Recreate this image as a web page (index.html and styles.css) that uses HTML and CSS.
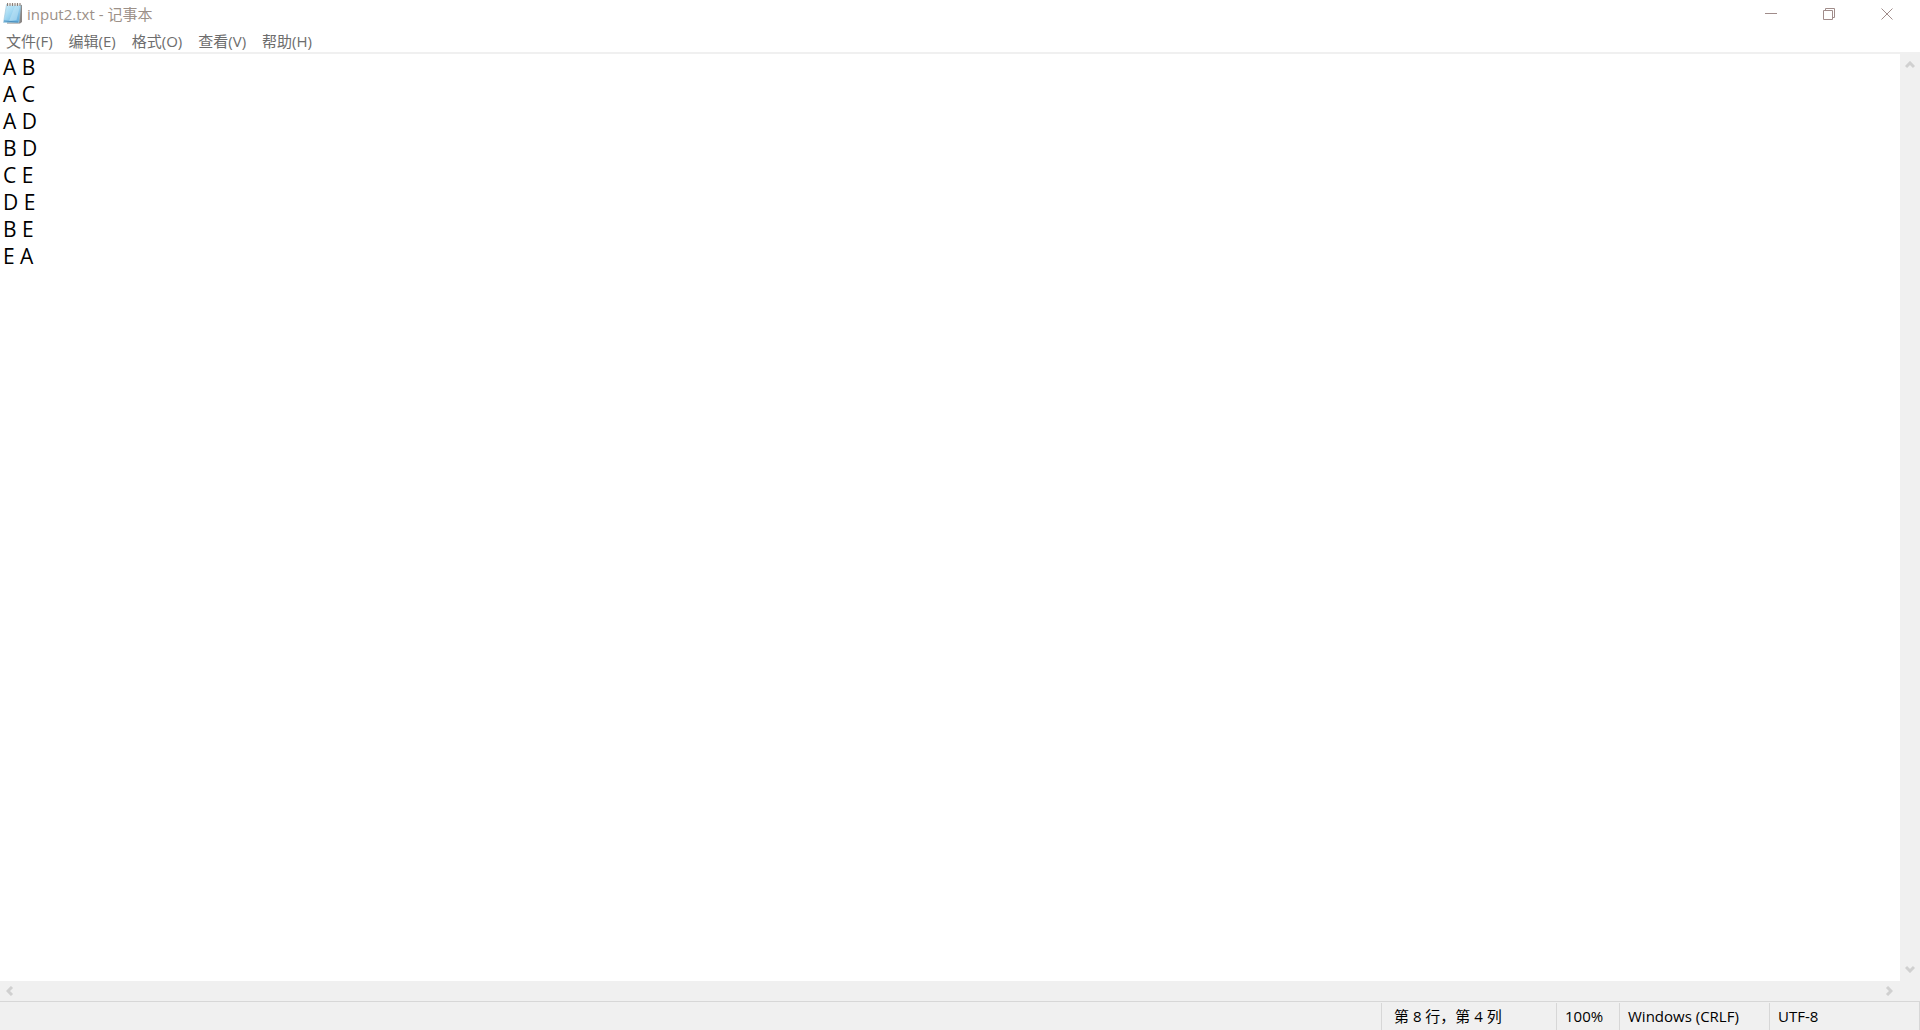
FILE: index.html
```html
<!DOCTYPE html>
<html lang="zh-CN">

<head>
    <meta charset="utf-8">
    <title>input2.txt - 记事本</title>
    <link rel="stylesheet" href="styles.css">
</head>

<body>
    <!-- title bar -->
    <header class="title-bar">
        <svg class="app-icon" width="20" height="22" viewBox="0 0 20 22">
            <defs>
                <linearGradient id="paper" x1="0" y1="0" x2="1" y2="1">
                    <stop offset="0" stop-color="#d3effa" />
                    <stop offset="0.4" stop-color="#a5daf3" />
                    <stop offset="1" stop-color="#5aa9dc" />
                </linearGradient>
            </defs>
            <path d="M5 2H19V19L17 20.500H4Z" fill="#8a8684" />
            <path d="M3.500 1.500H18L16 19.500H0.500Z" fill="url(#paper)" stroke="#9cc4da" stroke-width="0.600" />
            <path d="M12 3H17L13.500 17L6 18Z" fill="#c6e8f8" opacity="0.500" />
            <path d="M1 18L15 19" stroke="#4a8fbe" />
            <path d="M4 1.500H18" stroke="#e9e5e0" stroke-width="2" />
            <path d="M4.500 0V3M7 0V3M9.500 0V3M12 0V3M14.500 0V3M17 0V3" stroke="#8a7f78" />
        </svg>
        <h1 class="title">input2.txt - 记事本</h1>
        <div class="window-buttons">
            <button type="button" aria-label="最小化">
                <svg width="12" height="12" viewBox="0 0 12 12"><path d="M0 5.500H12" /></svg>
            </button>
            <button type="button" aria-label="还原">
                <svg width="12" height="12" viewBox="0 0 12 12"><path d="M0.500 2.500H9.500V11.500H0.500ZM2.500 2V0.500H11.500V9.500H10" /></svg>
            </button>
            <button type="button" aria-label="关闭">
                <svg width="12" height="12" viewBox="0 0 12 12"><path d="M0.500 0.500L11.500 11.500M11.500 0.500L0.500 11.500" /></svg>
            </button>
        </div>
    </header>
    <!-- menu -->
    <nav class="menu">
        <button type="button">文件(F)</button>
        <button type="button">编辑(E)</button>
        <button type="button">格式(O)</button>
        <button type="button">查看(V)</button>
        <button type="button">帮助(H)</button>
    </nav>
    <!-- text area with its scrollbars -->
    <main class="editor">
        <textarea class="text" aria-label="文本编辑器" wrap="off" spellcheck="false">A B
A C
A D
B D
C E
D E
B E
E A</textarea>
        <div class="scroll scroll-y">
            <button type="button" aria-label="向上滚动">
                <svg width="10" height="8" viewBox="0 0 10 8"><path d="M1 6L5 2L9 6" /></svg>
            </button>
            <button type="button" aria-label="向下滚动">
                <svg width="10" height="8" viewBox="0 0 10 8"><path d="M1 2L5 6L9 2" /></svg>
            </button>
        </div>
        <div class="scroll scroll-x">
            <button type="button" aria-label="向左滚动">
                <svg width="8" height="10" viewBox="0 0 8 10"><path d="M6 1L2 5L6 9" /></svg>
            </button>
            <button type="button" aria-label="向右滚动">
                <svg width="8" height="10" viewBox="0 0 8 10"><path d="M2 1L6 5L2 9" /></svg>
            </button>
        </div>
    </main>
    <!-- status bar -->
    <footer class="status-bar">
        <div class="status position">第 8 行，第 4 列</div>
        <div class="status zoom">100%</div>
        <div class="status line-end">Windows (CRLF)</div>
        <div class="status encoding">UTF-8</div>
    </footer>
</body>

</html>
```
FILE: styles.css
```css
* {
    margin: 0;
    padding: 0;
    box-sizing: border-box;
}

body {
    display: flex;
    flex-direction: column;
    height: 100vh;
    overflow: hidden;
    background: #fff;
    font-family: "Open Sans", "Noto Sans CJK SC", sans-serif;
    font-size: 15px;
}

button {
    border: 0 none;
    background: none;
    font: inherit;
    color: inherit;
}

svg {
    display: block;
    fill: none;
}

/*title bar*/

.title-bar {
    display: flex;
    align-items: center;
    height: 30px;
    padding: 0 4px 2px 3px;
    color: #9c9088;
}

.title {
    flex: 1;
    margin-left: 4px;
    font-size: 15px;
    font-weight: normal;
    line-height: 28px;
}

.window-buttons {
    display: flex;
    align-self: stretch;
}

.window-buttons button {
    display: flex;
    justify-content: center;
    width: 58px;
    padding-top: 8px;
}

.window-buttons svg {
    stroke: #a08c8a;
}

/*menu*/

.menu {
    display: flex;
    gap: 16px;
    padding: 0 6px;
    border-bottom: 2px solid #f0f0f0;
    color: #6d6d6d;
    line-height: 22px;
}

/*editor*/

.editor {
    flex: 1;
    display: grid;
    grid-template-columns: 1fr 20px;
    grid-template-rows: 1fr 20px;
    min-height: 0;
    background: #f0f0f0;
}

.text {
    border: 0 none;
    outline: none;
    resize: none;
    overflow: hidden;
    padding: 0 3px;
    background: #fff;
    color: #000;
    font-family: "Open Sans", "Noto Sans CJK SC", sans-serif;
    font-size: 21px;
    line-height: 27px;
}

.scroll {
    display: flex;
    justify-content: space-between;
}

.scroll-x {
    padding-right: 2px;
}

.scroll-y {
    flex-direction: column;
    padding: 1px 0 2px;
}

.scroll button {
    display: flex;
    align-items: center;
    justify-content: center;
    width: 19px;
    height: 20px;
}

.scroll svg {
    stroke: #d0d0d0;
    stroke-width: 3;
}

/*status bar*/

.status-bar {
    display: flex;
    justify-content: flex-end;
    height: 29px;
    padding-top: 1px;
    border-top: 1px solid #d7d7d7;
    border-right: 1px solid #d7d7d7;
    background: #f0f0f0;
    color: #000;
    line-height: 27px;
}

.status {
    border-left: 1px solid #d7d7d7;
    padding-left: 8px;
    white-space: nowrap;
}

.position {
    width: 175px;
    padding-left: 12px;
}

.zoom {
    width: 63px;
}

.line-end,
.encoding {
    width: 150px;
}
```
